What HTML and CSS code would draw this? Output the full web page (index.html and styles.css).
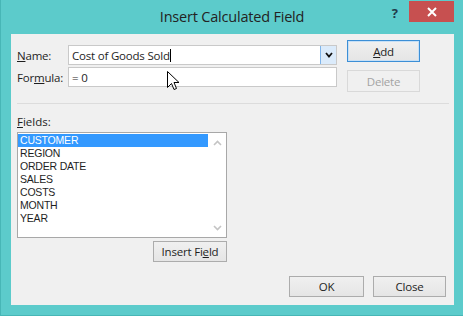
FILE: index.html
```html
<!DOCTYPE html>
<html lang="en">
<head>
    <meta charset="UTF-8">
    <title>Insert Calculated Field</title>
    <link rel="stylesheet" href="styles.css">
</head>
<body>
<div class="window">
    <div class="titlebar">
        <span></span>
        <span class="title">Insert Calculated Field</span>
        <div class="controls">
            <span class="help-button">?</span>
            <span class="close-button">
                <svg width="10" height="10" viewBox="0 0 10 10"><path d="M1 1 L9 9 M9 1 L1 9" stroke="#fff" stroke-width="2"/></svg>
            </span>
        </div>
    </div>

    <div class="client">
        <div class="top-section">
            <div class="form-rows">
                <div class="form-row">
                    <label class="label"><u>N</u>ame:</label>
                    <div class="combo">
                        <span class="field-text">Cost of Goods Sold<span class="caret"></span></span>
                        <span class="combo-button">
                            <svg width="8" height="6" viewBox="0 0 8 6"><path d="M1 1 L4 4.5 L7 1" fill="none" stroke="#111" stroke-width="1.8"/></svg>
                        </span>
                    </div>
                </div>
                <div class="form-row">
                    <label class="label">For<u>m</u>ula:</label>
                    <div class="textbox"><span class="field-text">= 0</span></div>
                </div>
            </div>
            <div class="side-buttons">
                <button class="btn btn-default"><u>A</u>dd</button>
                <button class="btn btn-disabled">Delete</button>
            </div>
        </div>

        <div class="separator"></div>

        <div class="fields-section">
            <div class="fields-label"><u>F</u>ields:</div>
            <div class="listbox">
                <ul class="list-items">
                    <li class="selected">CUSTOMER</li>
                    <li>REGION</li>
                    <li>ORDER DATE</li>
                    <li>SALES</li>
                    <li>COSTS</li>
                    <li>MONTH</li>
                    <li>YEAR</li>
                </ul>
                <div class="scrollbar">
                    <svg width="9" height="6" viewBox="0 0 9 6"><path d="M1 5 L4.5 1.5 L8 5" fill="none" stroke="#c4c4c4" stroke-width="1.6"/></svg>
                    <svg width="9" height="6" viewBox="0 0 9 6"><path d="M1 1 L4.5 4.5 L8 1" fill="none" stroke="#c4c4c4" stroke-width="1.6"/></svg>
                </div>
            </div>
            <div class="insert-row">
                <button class="btn btn-insert">Insert Fi<u>e</u>ld</button>
            </div>
        </div>

        <div class="footer">
            <button class="btn btn-ok">OK</button>
            <button class="btn btn-close">Close</button>
        </div>
    </div>

    <svg class="mouse-cursor" width="13" height="20" viewBox="0 0 13 20">
        <path d="M0.5 0.5 L0.5 16.5 L4.5 12.5 L7 18.5 L9.5 17.5 L7 11.5 L12 11.5 Z" fill="#fff" stroke="#000" stroke-width="1"/>
    </svg>
</div>
</body>
</html>
```

FILE: styles.css
```css
* {
    margin: 0;
    padding: 0;
    box-sizing: border-box;
    font-family: 'Open Sans', 'Noto Sans', sans-serif;
}

body {
    width: 463px;
    height: 316px;
    overflow: hidden;
    background-color: #ffffff;
}

.window {
    position: relative;
    width: 463px;
    height: 316px;
    background-color: #5ccbcb;
    border-left: 1px solid #47b6b6;
    border-bottom: 1px solid #47b6b6;
}

.titlebar {
    height: 34px;
    display: grid;
    grid-template-columns: 1fr auto 1fr;
    align-items: start;
}

.title {
    margin-top: 7px;
    font-size: 14.5px;
    color: #232323;
    letter-spacing: -0.2px;
}

.controls {
    display: flex;
    justify-content: flex-end;
    padding-right: 9px;
}

.help-button {
    width: 24px;
    margin-top: 4px;
    font-size: 13px;
    font-weight: bold;
    color: #1f3a4a;
    text-align: right;
    padding-right: 11px;
}

.close-button {
    width: 45px;
    height: 21px;
    margin-top: 1px;
    background-color: #c75050;
    display: flex;
    align-items: center;
    justify-content: center;
}

.client {
    margin: 0 9px 0 10px;
    height: 271px;
    background-color: #f0f0f0;
    padding: 0 8px 0 6px;
    font-size: 11.5px;
    color: #1e1e1e;
}

.top-section {
    display: flex;
    gap: 10px;
}

.form-rows {
    padding-top: 11px;
    display: flex;
    flex-direction: column;
    gap: 2px;
}

.form-row {
    display: flex;
    align-items: center;
}

.label {
    width: 51px;
    letter-spacing: -0.2px;
}

.combo,
.textbox {
    width: 269px;
    height: 20px;
    background-color: #ffffff;
    border: 1px solid #c9c9c9;
    display: flex;
    align-items: center;
}

.field-text {
    flex: 1;
    padding-left: 3px;
    letter-spacing: -0.2px;
}

.caret {
    display: inline-block;
    width: 1px;
    height: 13px;
    background-color: #000;
    vertical-align: -2px;
}

.combo-button {
    width: 16px;
    height: 18px;
    background-color: #dbebfb;
    border-left: 1px solid #7eb4ea;
    display: flex;
    align-items: center;
    justify-content: center;
}

.side-buttons {
    padding-top: 6px;
    display: flex;
    flex-direction: column;
    gap: 8px;
}

.btn {
    font-size: 11.5px;
    color: #1e1e1e;
    background: linear-gradient(#f0f0f0, #e5e5e5);
    border: 1px solid #acacac;
    letter-spacing: -0.2px;
}

.btn-default,
.btn-disabled {
    width: 73px;
    height: 22px;
}

.btn-default {
    border-color: #3c8fd6;
    box-shadow: inset 0 0 0 1px #c7e0f6;
}

.btn-disabled {
    color: #a3a3a3;
    background: #f0f0f0;
    border-color: #d9d9d9;
}

.separator {
    margin-top: 11px;
    height: 1px;
    background-color: #dcdcdc;
    margin-right: -3px;
}

.fields-section {
    width: 210px;
}

.fields-label {
    margin-top: 10px;
    height: 18px;
    line-height: 16px;
}

.listbox {
    height: 106px;
    background-color: #ffffff;
    border: 1px solid #a8a8a8;
    display: flex;
}

.list-items {
    list-style: none;
    flex: 1;
    padding-top: 1px;
}

.list-items li {
    height: 13px;
    line-height: 13px;
    padding-left: 2px;
    font-family: 'Liberation Sans', Arial, sans-serif;
    font-size: 10.5px;
    letter-spacing: -0.2px;
}

.list-items .selected {
    background-color: #3399ff;
    color: #ffffff;
}

.scrollbar {
    width: 18px;
    display: flex;
    flex-direction: column;
    justify-content: space-between;
    align-items: center;
    padding: 7px 0 6px;
}

.insert-row {
    display: flex;
    justify-content: flex-end;
    margin-top: 3px;
}

.btn-insert {
    width: 74px;
    height: 21px;
}

.footer {
    display: flex;
    justify-content: flex-end;
    gap: 9px;
    margin-top: 14px;
}

.btn-ok {
    width: 75px;
    height: 21px;
}

.btn-close {
    width: 73px;
    height: 21px;
}

.mouse-cursor {
    position: absolute;
    left: 166px;
    top: 71px;
}
```
